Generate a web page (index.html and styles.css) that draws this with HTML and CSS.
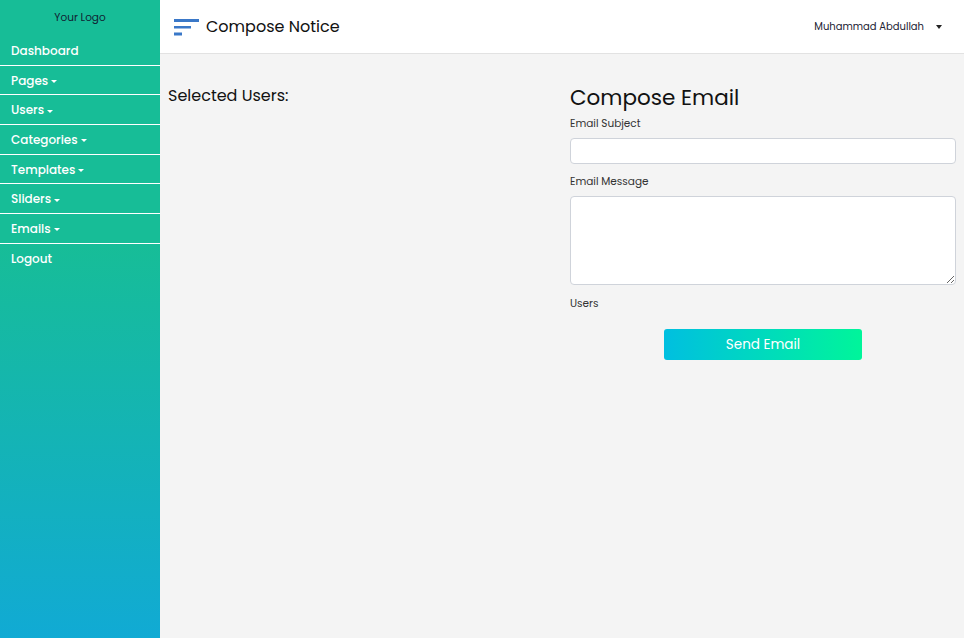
FILE: index.html
```html
<!DOCTYPE html>
<html>
<head>
<meta charset="utf-8">
<link rel="stylesheet" href="styles.css">
</head>
<body>
<div class="layout">
  <aside class="sidebar">
    <div class="logo">Your Logo</div>
    <nav class="menu">
      <a class="item">Dashboard</a>
      <a class="item">Pages<span class="caret"></span></a>
      <a class="item">Users<span class="caret"></span></a>
      <a class="item">Categories<span class="caret"></span></a>
      <a class="item">Templates<span class="caret"></span></a>
      <a class="item">Sliders<span class="caret"></span></a>
      <a class="item">Emails<span class="caret"></span></a>
      <a class="item last">Logout</a>
    </nav>
  </aside>
  <div class="main">
    <header class="topbar">
      <div class="title-wrap">
        <svg class="menu-icon" width="26" height="18" viewBox="0 0 26 18">
          <rect x="0" y="1" width="25" height="3" fill="#3a78c8"/>
          <rect x="0" y="8" width="17" height="2.5" fill="#3a78c8"/>
          <rect x="0" y="14.5" width="8" height="3" fill="#3a78c8"/>
        </svg>
        <h1 class="page-title">Compose Notice</h1>
      </div>
      <div class="user">Muhammad Abdullah<span class="caret dark"></span></div>
    </header>
    <section class="content">
      <div class="col-left">
        <h2 class="selected">Selected Users:</h2>
      </div>
      <div class="col-right">
        <h2 class="compose">Compose Email</h2>
        <label class="lbl">Email Subject</label>
        <input class="field" type="text">
        <label class="lbl">Email Message</label>
        <textarea class="field area"></textarea>
        <label class="lbl users">Users</label>
        <div class="btn-row"><button class="send">Send Email</button></div>
      </div>
    </section>
  </div>
</div>
</body>
</html>
```

FILE: styles.css
```css
* { box-sizing: border-box; }
html, body { margin: 0; padding: 0; height: 100%; }
body {
  font-family: "Poppins", "Open Sans", "DejaVu Sans", sans-serif;
  background: #f4f4f4;
  color: #111;
}
.layout { display: flex; height: 638px; }
.sidebar {
  width: 160px;
  flex: none;
  background: linear-gradient(to bottom, #17bd97 0%, #17bd97 38%, #11aad4 100%);
}
.logo {
  height: 36px;
  text-align: center;
  font-size: 10.5px;
  line-height: 35px;
  color: #123;
}
.menu { display: flex; flex-direction: column; }
.item {
  display: block;
  height: 29.7px;
  line-height: 29px;
  padding-left: 11px;
  font-size: 12px;
  font-weight: 500;
  color: #fff;
  border-bottom: 1px solid #fff;
}
.item.last { border-bottom: none; }
.caret {
  display: inline-block;
  width: 0; height: 0;
  margin-left: 3px;
  vertical-align: middle;
  border-top: 3.5px solid #fff;
  border-left: 3.5px solid transparent;
  border-right: 3.5px solid transparent;
}
.caret.dark { border-top-color: #222; margin-left: 12px; border-top-width: 4px; }
.main { flex: 1; display: flex; flex-direction: column; }
.topbar {
  height: 54px;
  background: #fff;
  border-bottom: 1px solid #e2e2e2;
  display: flex;
  align-items: center;
  justify-content: space-between;
  padding: 0 22px 0 14px;
}
.title-wrap { display: flex; align-items: center; gap: 6px; }
.menu-icon { display: block; }
.page-title { margin: 0; font-size: 16px; font-weight: 400; color: #111; }
.user { font-size: 10px; color: #223; }
.content {
  flex: 1;
  display: grid;
  grid-template-columns: 1fr 1fr;
  gap: 16px;
  padding: 32px 8px 0 8px;
  align-items: start;
}
.selected { margin: 0; font-size: 16px; font-weight: 400; line-height: 20px; }
.col-right { display: flex; flex-direction: column; }
.compose { margin: -1px 0 4px 0; font-size: 21.5px; font-weight: 400; line-height: 26px; }
.lbl { font-size: 10.5px; color: #333; line-height: 14px; margin-top: 2px; margin-bottom: 7px; }
.field {
  width: 100%;
  height: 26px;
  border: 1px solid #cfd3da;
  border-radius: 4px;
  background: #fff;
  margin-bottom: 9px;
  font-family: inherit;
}
.area { height: 89px; resize: vertical; margin-bottom: 10px; }
.users { margin-bottom: 0; }
.btn-row { display: flex; justify-content: center; margin-top: 18px; }
.send {
  width: 198px;
  height: 31px;
  border: none;
  border-radius: 3px;
  background: linear-gradient(to right, #00bfe0, #00f59a);
  color: #fff;
  font-family: inherit;
  font-size: 13.5px;
}
```
